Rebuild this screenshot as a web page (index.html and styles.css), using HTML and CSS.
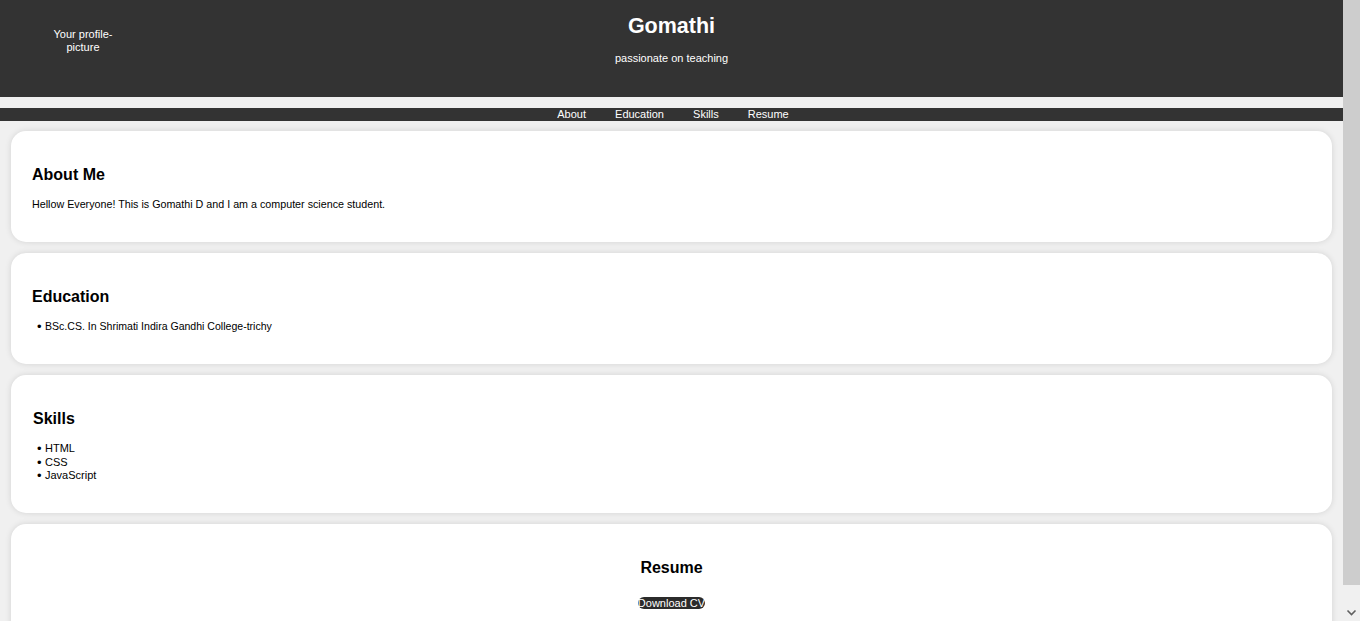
FILE: index.html
```html
<!DOCTYPE html>
<html lang="en">
<head>
<meta charset="utf-8">
<title>Gomathi - Portfolio</title>
<link rel="stylesheet" href="styles.css">
</head>
<body>
<header class="site-header">
  <div class="profile">
    <div class="profile-pic">Your profile-picture</div>
  </div>
  <div class="intro">
    <h1 class="name">Gomathi</h1>
    <p class="tagline">passionate on teaching</p>
  </div>
  <div class="spacer"></div>
</header>
<nav class="site-nav">
  <a href="#about">About</a>
  <a href="#education">Education</a>
  <a href="#skills">Skills</a>
  <a href="#resume">Resume</a>
</nav>
<main class="content">
  <section class="card" id="about">
    <h2>About Me</h2>
    <p>Hellow Everyone! This is Gomathi D and I am a computer science student.</p>
  </section>
  <section class="card" id="education">
    <h2>Education</h2>
    <ul class="edu-list">
      <li>BSc.CS. In Shrimati Indira Gandhi College-trichy</li>
    </ul>
  </section>
  <section class="card" id="skills">
    <h2 class="skills-title">Skills</h2>
    <ul>
      <li>HTML</li>
      <li>CSS</li>
      <li>JavaScript</li>
    </ul>
  </section>
  <section class="card card-center" id="resume">
    <h2>Resume</h2>
    <div class="cv-row"><a class="cv-btn" href="#">Download CV</a></div>
  </section>
</main>
<div class="scrollbar" aria-hidden="true">
  <div class="scroll-thumb"></div>
  <div class="scroll-track"></div>
  <div class="scroll-down">
    <svg width="17" height="17" viewBox="0 0 17 17"><path d="M4.5 6.5l4 4 4-4" fill="none" stroke="#606060" stroke-width="1.6"/></svg>
  </div>
</div>
</body>
</html>
```

FILE: styles.css
```css
html, body {
  margin: 0;
  padding: 0;
}
body {
  background: #f0f0f0;
  font-family: "Liberation Sans", Arial, sans-serif;
  color: #000;
  margin-right: 17px;
}
.site-header {
  background: #333;
  color: #fff;
  display: grid;
  grid-template-columns: 166px 1fr 166px;
  height: 97px;
}
.profile {
  display: flex;
  justify-content: center;
  padding-top: 28px;
}
.profile-pic {
  width: 70px;
  font-size: 11px;
  line-height: 13px;
  text-align: center;
  height: 30px;
}
.intro {
  text-align: center;
}
.name {
  font-size: 21.5px;
  line-height: 25px;
  margin: 13.5px 0 0;
  font-weight: bold;
}
.tagline {
  font-size: 11px;
  line-height: 13px;
  margin: 13px 0 0;
}
.site-nav {
  margin-top: 11px;
  background: #333;
  text-align: center;
  font-size: 11px;
  line-height: 13px;
  height: 13px;
  padding-left: 3px;
}
.site-nav a {
  color: #fff;
  text-decoration: none;
  padding: 0 13px;
}
.content {
  padding: 10px 11px 11px;
  display: flex;
  flex-direction: column;
  gap: 11px;
}
.card {
  background: #fff;
  border-radius: 15px;
  box-shadow: 0 0 6px rgba(0, 0, 0, 0.12);
  padding: 21px;
}
.card h2 {
  font-size: 16px;
  line-height: 18px;
  margin: 14px 0 0;
  font-weight: bold;
}
.card .skills-title {
  padding-left: 1px;
}
.card p {
  font-size: 10.73px;
  line-height: 13px;
  margin: 14px 0 10px;
}
.card ul {
  font-size: 11px;
  line-height: 13.34px;
  margin: 14px 0 10px;
  padding-left: 13px;
  list-style: none;
}
.card li::before {
  content: "•";
  display: inline-block;
  width: 8px;
  margin-left: -8px;
  font-size: 13px;
  line-height: 13px;
  vertical-align: top;
}
.card .edu-list {
  font-size: 10.55px;
}
.card-center {
  text-align: center;
  padding-bottom: 40px;
}
.cv-row {
  margin-top: 16px;
}
.cv-btn {
  display: inline-block;
  background: #2b2b2b;
  color: #fff;
  text-decoration: none;
  font-size: 11px;
  line-height: 12px;
  border-radius: 6px;
}
.scrollbar {
  position: fixed;
  top: 0;
  right: 0;
  bottom: 0;
  width: 17px;
  display: flex;
  flex-direction: column;
  background: #f0f0f0;
}
.scroll-thumb {
  height: 585px;
  background: #cdcdcd;
}
.scroll-track {
  flex: 1;
}
.scroll-down {
  height: 17px;
  display: flex;
}
```
